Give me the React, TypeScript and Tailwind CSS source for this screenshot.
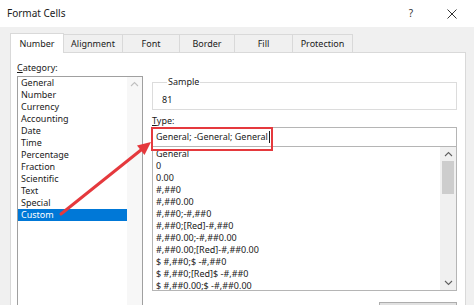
import { ReactNode } from "react";

const categories = [
  "General",
  "Number",
  "Currency",
  "Accounting",
  "Date",
  "Time",
  "Percentage",
  "Fraction",
  "Scientific",
  "Text",
  "Special",
  "Custom",
];

const formats = [
  "General",
  "0",
  "0.00",
  "#,##0",
  "#,##0.00",
  "#,##0;-#,##0",
  "#,##0;[Red]-#,##0",
  "#,##0.00;-#,##0.00",
  "#,##0.00;[Red]-#,##0.00",
  "$ #,##0;$ -#,##0",
  "$ #,##0;[Red]$ -#,##0",
  "$ #,##0.00;$ -#,##0.00",
  "$ #,##0.00;[Red]$ -#,##0.00",
];

const tabs: { label: string; width: string; active?: boolean }[] = [
  { label: "Number", width: "w-[54px]", active: true },
  { label: "Alignment", width: "w-[59px]" },
  { label: "Font", width: "w-[57px]" },
  { label: "Border", width: "w-[55px]" },
  { label: "Fill", width: "w-[58px]" },
  { label: "Protection", width: "w-[60px]" },
];

function Chevron({ up, className }: { up?: boolean; className?: string }) {
  return (
    <svg width="9" height="6" viewBox="0 0 9 6" className={className}>
      <path
        d={up ? "M1 5 L4.5 1.5 L8 5" : "M1 1 L4.5 4.5 L8 1"}
        fill="none"
        stroke="currentColor"
        strokeWidth="1.1"
      />
    </svg>
  );
}

function Tab({ label, width, active }: { label: string; width: string; active?: boolean }) {
  return (
    <div
      className={
        active
          ? `${width} relative z-10 -mb-px flex h-[20px] items-center justify-center border border-b-0 border-[#d9d9d9] bg-white`
          : `${width} flex h-[18px] items-center justify-center border border-l-0 border-b-0 border-[#d9d9d9] bg-[#f0f0f0]`
      }
    >
      {label}
    </div>
  );
}

function Label({ accel, rest }: { accel: string; rest: string }) {
  return (
    <div className="leading-[12px]">
      <span className="underline underline-offset-1">{accel}</span>
      {rest}
    </div>
  );
}

function ListFrame({ children }: { children: ReactNode }) {
  return <div className="flex-1 overflow-hidden">{children}</div>;
}

export default function App() {
  return (
    <div
      className="relative h-[305px] w-[474px] overflow-hidden bg-[#f0f0f0] text-[9px] text-[#1b1b1b]"
      style={{ fontFamily: '"Noto Sans", "Open Sans", sans-serif' }}
    >
      {/* title bar */}
      <div className="flex h-[27px] items-center justify-between bg-white pl-[7px] pr-[17px]">
        <span className="text-[10px]">Format Cells</span>
        <div className="flex items-center gap-[34px] text-[#333]">
          <span className="text-[10px]">?</span>
          <svg width="10" height="10" viewBox="0 0 10 10">
            <path d="M0.5 0.5 L9.5 9.5 M9.5 0.5 L0.5 9.5" stroke="currentColor" strokeWidth="1" />
          </svg>
        </div>
      </div>

      <div className="px-[10px] pt-[6px]">
        {/* tabs */}
        <div className="flex items-end">
          {tabs.map((t) => (
            <Tab key={t.label} {...t} />
          ))}
        </div>

        {/* tab panel */}
        <div className="flex h-[300px] w-[456px] gap-[9px] border border-[#d9d9d9] bg-white pl-[6px] pt-[9px]">
          {/* category column */}
          <div className="w-[126px]">
            <Label accel="C" rest="ategory:" />
            <div className="mt-[2px] flex h-[240px] border border-[#a0a0a0]">
              <ListFrame>
                {categories.map((c) => (
                  <div
                    key={c}
                    className={
                      c === "Custom"
                        ? "bg-[#0078d7] pl-[3px] leading-[12px] text-white"
                        : "pl-[3px] leading-[12px]"
                    }
                  >
                    {c}
                  </div>
                ))}
              </ListFrame>
              <div className="flex w-[15px] justify-center bg-[#f7f7f7] pt-[4px] text-[#c0c0c0]">
                <Chevron up />
              </div>
            </div>
          </div>

          {/* right column */}
          <div className="w-[305px]">
            <fieldset className="mt-[14px] border border-[#dcdcdc] pb-[3px] pl-[9px]">
              <legend className="ml-[5px] px-[1px] leading-[12px]">Sample</legend>
              <div className="pt-[6px] leading-[12px]">81</div>
            </fieldset>

            <div className="mt-[5px]">
              <Label accel="T" rest="ype:" />
            </div>
            <div className="flex h-[20px] items-center border border-[#b5b5b5] pl-[3px]">
              General; -General; General
              <span className="ml-px h-[12px] w-px bg-[#1b1b1b]" />
            </div>
            <div className="flex h-[144px] border border-t-0 border-[#b5b5b5]">
              <ListFrame>
                <div className="pl-[3px] pt-[1px]">
                  {formats.map((f) => (
                    <div key={f} className="whitespace-nowrap leading-[12px]">
                      {f}
                    </div>
                  ))}
                </div>
              </ListFrame>
              <div className="flex w-[16px] flex-col items-center bg-[#f0f0f0] text-[#606060]">
                <div className="flex h-[14px] items-center">
                  <Chevron up />
                </div>
                <div className="h-[33px] w-[12px] bg-[#cdcdcd]" />
                <div className="flex-1" />
                <div className="flex h-[14px] items-center">
                  <Chevron />
                </div>
              </div>
            </div>

            <div className="mt-[11px] flex justify-end">
              <div className="flex h-[22px] w-[78px] items-center justify-center border border-[#adadad] bg-[#e1e1e1]">
                Delete
              </div>
            </div>
          </div>
        </div>
      </div>

      {/* red highlight and arrow drawn over the dialog */}
      <div className="absolute left-[151px] top-[127px] h-[24px] w-[122px] border-2 border-[#e5393d]" />
      <svg className="pointer-events-none absolute left-0 top-0" width="474" height="305">
        <line x1="61" y1="214" x2="141" y2="150" stroke="#e5393d" strokeWidth="3" strokeLinecap="round" />
        <polygon points="151,142 144.5,155 137,145.4" fill="#e5393d" />
      </svg>
    </div>
  );
}
